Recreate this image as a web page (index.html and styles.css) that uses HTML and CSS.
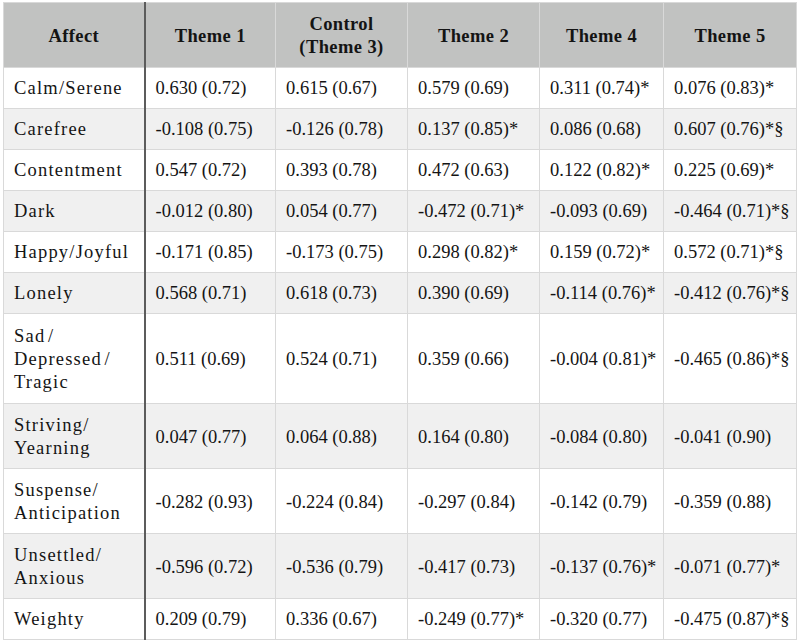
FILE: index.html
```html
<!DOCTYPE html>
<html>
<head>
<meta charset="utf-8">
<link rel="stylesheet" href="styles.css">
</head>
<body>
<table class="data">
<colgroup>
<col class="c-affect"><col class="c-t1"><col class="c-ctrl"><col class="c-t2"><col class="c-t4"><col class="c-t5">
</colgroup>
<thead>
<tr><th class="first">Affect</th><th>Theme 1</th><th>Control<br>(Theme 3)</th><th>Theme 2</th><th>Theme 4</th><th>Theme 5</th></tr>
</thead>
<tbody>
<tr><td class="first">Calm/Serene</td><td>0.630 (0.72)</td><td>0.615 (0.67)</td><td>0.579 (0.69)</td><td>0.311 (0.74)*</td><td>0.076 (0.83)*</td></tr>
<tr class="alt"><td class="first">Carefree</td><td>-0.108 (0.75)</td><td>-0.126 (0.78)</td><td>0.137 (0.85)*</td><td>0.086 (0.68)</td><td>0.607 (0.76)*§</td></tr>
<tr><td class="first">Contentment</td><td>0.547 (0.72)</td><td>0.393 (0.78)</td><td>0.472 (0.63)</td><td>0.122 (0.82)*</td><td>0.225 (0.69)*</td></tr>
<tr class="alt"><td class="first">Dark</td><td>-0.012 (0.80)</td><td>0.054 (0.77)</td><td>-0.472 (0.71)*</td><td>-0.093 (0.69)</td><td>-0.464 (0.71)*§</td></tr>
<tr><td class="first">Happy/Joyful</td><td>-0.171 (0.85)</td><td>-0.173 (0.75)</td><td>0.298 (0.82)*</td><td>0.159 (0.72)*</td><td>0.572 (0.71)*§</td></tr>
<tr class="alt"><td class="first">Lonely</td><td>0.568 (0.71)</td><td>0.618 (0.73)</td><td>0.390 (0.69)</td><td>-0.114 (0.76)*</td><td>-0.412 (0.76)*§</td></tr>
<tr class="multi tall"><td class="first">Sad&#8202;/<br>Depressed&#8202;/<br>Tragic</td><td>0.511 (0.69)</td><td>0.524 (0.71)</td><td>0.359 (0.66)</td><td>-0.004 (0.81)*</td><td>-0.465 (0.86)*§</td></tr>
<tr class="alt multi"><td class="first">Striving/<br>Yearning</td><td>0.047 (0.77)</td><td>0.064 (0.88)</td><td>0.164 (0.80)</td><td>-0.084 (0.80)</td><td>-0.041 (0.90)</td></tr>
<tr class="multi"><td class="first">Suspense/<br>Anticipation</td><td>-0.282 (0.93)</td><td>-0.224 (0.84)</td><td>-0.297 (0.84)</td><td>-0.142 (0.79)</td><td>-0.359 (0.88)</td></tr>
<tr class="alt multi"><td class="first">Unsettled/<br>Anxious</td><td>-0.596 (0.72)</td><td>-0.536 (0.79)</td><td>-0.417 (0.73)</td><td>-0.137 (0.76)*</td><td>-0.071 (0.77)*</td></tr>
<tr><td class="first">Weighty</td><td>0.209 (0.79)</td><td>0.336 (0.67)</td><td>-0.249 (0.77)*</td><td>-0.320 (0.77)</td><td>-0.475 (0.87)*§</td></tr>
</tbody>
</table>
</body>
</html>
```
FILE: styles.css
```css
html, body {
  margin: 0;
  padding: 0;
  background: #ffffff;
}
body {
  font-family: "Liberation Serif", "Times New Roman", serif;
  font-size: 18.5px;
  color: #141414;
}
.data {
  margin: 2px 0 0 3px;
  width: 793px;
  table-layout: fixed;
  border-collapse: collapse;
  border: 1px solid #d9d9d9;
}
.c-affect { width: 141px; }
.c-t1 { width: 131px; }
.c-ctrl { width: 132px; }
.c-t2 { width: 132px; }
.c-t4 { width: 124px; }
.c-t5 { width: 133px; }
.data th, .data td {
  border: 1px solid #d9d9d9;
  line-height: 23px;
  padding: 9px 10px 8px;
  vertical-align: middle;
}
.data th {
  background: #c1c2c1;
  font-weight: bold;
  text-align: center;
  padding: 10px 4px 8px;
  letter-spacing: 0.4px;
}
.data td {
  text-align: left;
  white-space: nowrap;
}
.data .first {
  border-right: 2px solid #5c5c5c;
}
.data td.first {
  letter-spacing: 1.2px;
}
.data tr.alt td {
  background: #f0f0f0;
}
.data tr.multi td {
  padding-top: 10px;
  padding-bottom: 8px;
}
.data tr.tall td {
  padding-top: 11px;
  padding-bottom: 9px;
}
```
